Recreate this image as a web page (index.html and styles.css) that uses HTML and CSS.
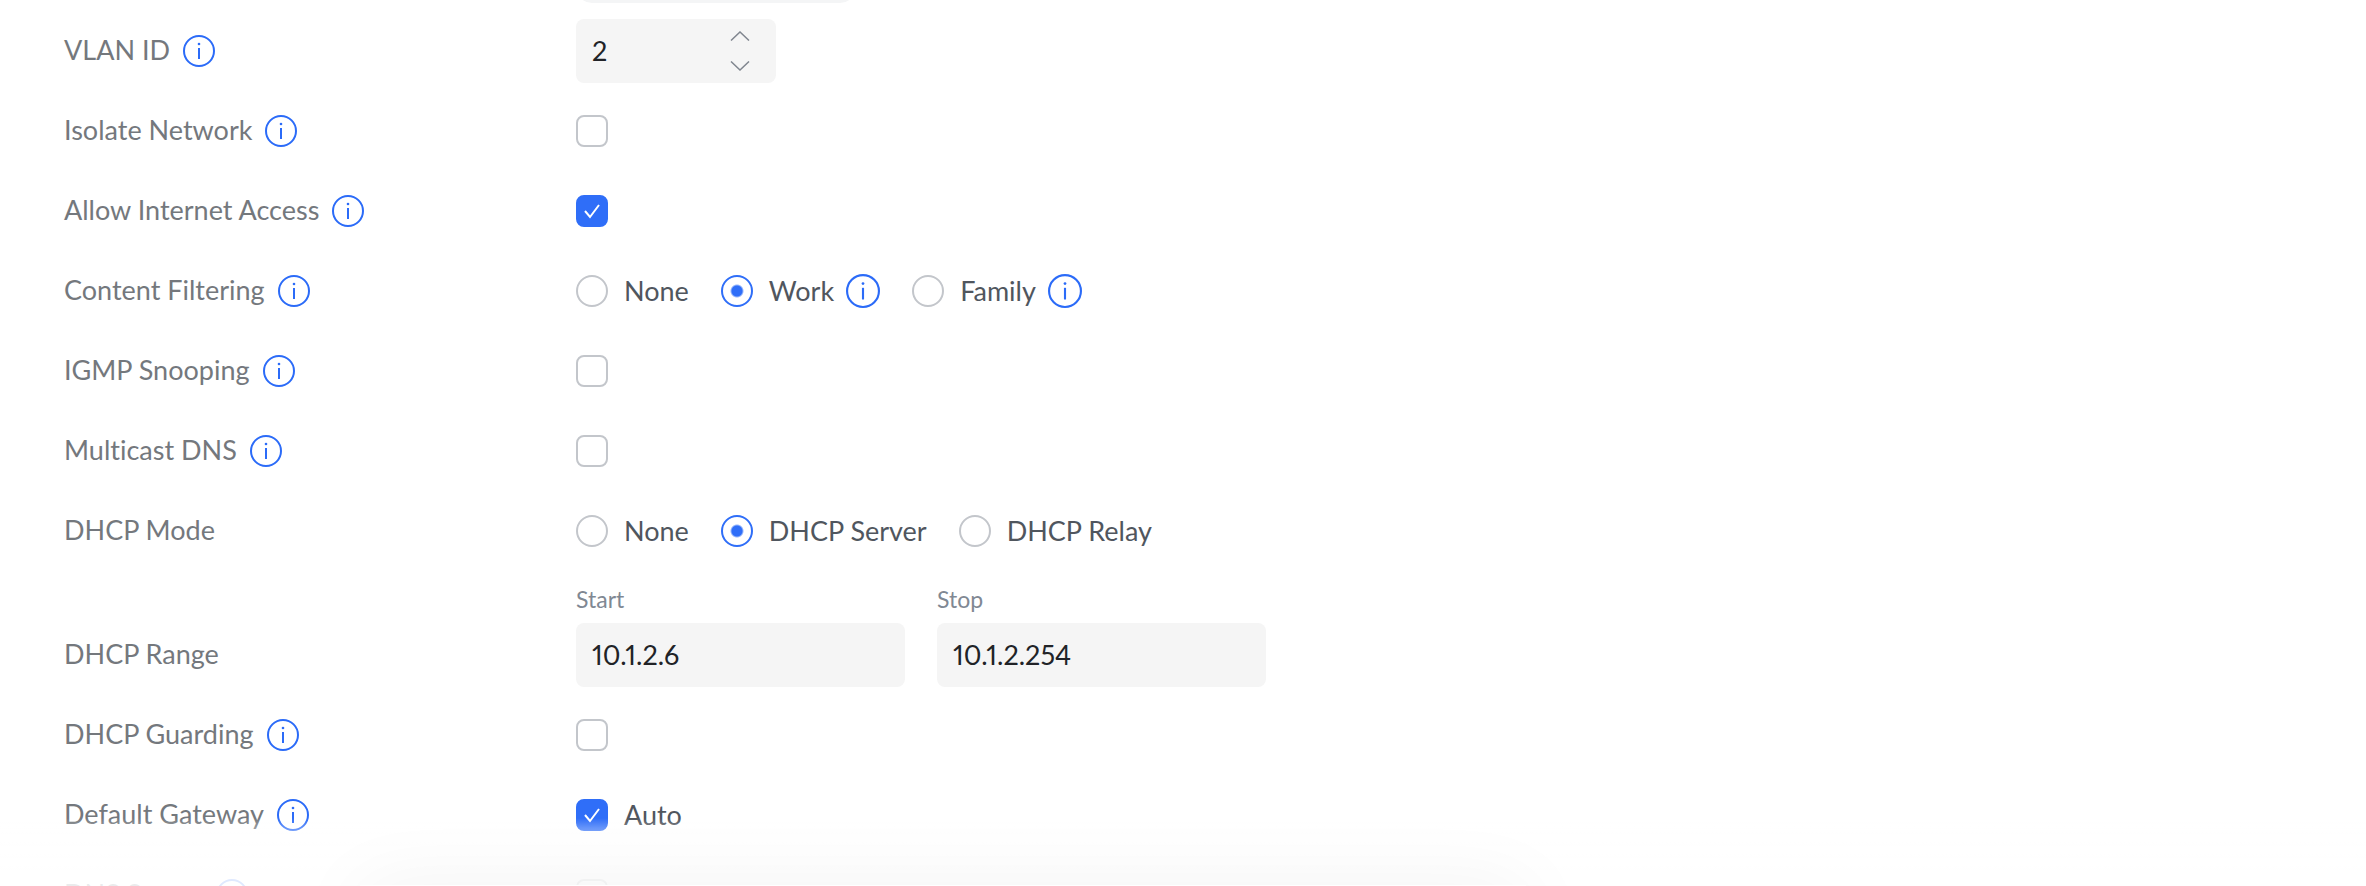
FILE: index.html
```html
<!DOCTYPE html>
<html lang="en">

<head>
    <meta charset="UTF-8">
    <title>Network Settings</title>
    <link rel="stylesheet" href="styles.css">
</head>

<body>

    <svg class="sprite" aria-hidden="true">
        <symbol id="info" viewBox="0 0 32 32">
            <circle cx="16" cy="16" r="15" fill="none" stroke="currentColor" stroke-width="2"/>
            <path d="M16 13v11" fill="none" stroke="currentColor" stroke-width="2"/>
            <circle cx="16" cy="9" r="1.3" fill="currentColor"/>
        </symbol>
    </svg>

    <form class="settings">
        <div class="row">
            <span></span>
            <button type="button" class="pill" aria-label="Network options"></button>
        </div>

        <div class="row">
            <div class="label">
                <label for="vlan">VLAN ID</label>
                <svg class="info"><use href="#info"/></svg>
            </div>
            <div class="number">
                <input type="text" inputmode="numeric" id="vlan" value="2">
                <div class="steps">
                    <button type="button" aria-label="Increase">
                        <svg viewBox="0 0 20 10"><path d="M1 9.5L10 1L19 9.5"/></svg>
                    </button>
                    <button type="button" aria-label="Decrease">
                        <svg viewBox="0 0 20 10"><path d="M1 .5L10 9L19 .5"/></svg>
                    </button>
                </div>
            </div>
        </div>

        <div class="row">
            <div class="label">
                <label for="isolate">Isolate Network</label>
                <svg class="info"><use href="#info"/></svg>
            </div>
            <div class="options">
                <input type="checkbox" id="isolate">
            </div>
        </div>

        <div class="row">
            <div class="label">
                <label for="internet">Allow Internet Access</label>
                <svg class="info"><use href="#info"/></svg>
            </div>
            <div class="options">
                <input type="checkbox" id="internet" checked>
            </div>
        </div>

        <div class="row">
            <div class="label">
                <span>Content Filtering</span>
                <svg class="info"><use href="#info"/></svg>
            </div>
            <div class="options">
                <label class="option"><input type="radio" name="filter">None</label>
                <div class="option-info">
                    <label class="option"><input type="radio" name="filter" checked>Work</label>
                    <svg class="info"><use href="#info"/></svg>
                </div>
                <div class="option-info">
                    <label class="option"><input type="radio" name="filter">Family</label>
                    <svg class="info"><use href="#info"/></svg>
                </div>
            </div>
        </div>

        <div class="row">
            <div class="label">
                <label for="igmp">IGMP Snooping</label>
                <svg class="info"><use href="#info"/></svg>
            </div>
            <div class="options">
                <input type="checkbox" id="igmp">
            </div>
        </div>

        <div class="row">
            <div class="label">
                <label for="mdns">Multicast DNS</label>
                <svg class="info"><use href="#info"/></svg>
            </div>
            <div class="options">
                <input type="checkbox" id="mdns">
            </div>
        </div>

        <div class="row">
            <div class="label">
                <span>DHCP Mode</span>
            </div>
            <div class="options">
                <label class="option"><input type="radio" name="dhcp">None</label>
                <label class="option"><input type="radio" name="dhcp" checked>DHCP Server</label>
                <label class="option"><input type="radio" name="dhcp">DHCP Relay</label>
            </div>
        </div>

        <div class="row">
            <div class="label">
                <span>DHCP Range</span>
            </div>
            <div class="range">
                <div class="field">
                    <label for="start">Start</label>
                    <input type="text" id="start" value="10.1.2.6">
                </div>
                <div class="field">
                    <label for="stop">Stop</label>
                    <input type="text" id="stop" value="10.1.2.254">
                </div>
            </div>
        </div>

        <div class="row">
            <div class="label">
                <label for="guard">DHCP Guarding</label>
                <svg class="info"><use href="#info"/></svg>
            </div>
            <div class="options">
                <input type="checkbox" id="guard">
            </div>
        </div>

        <div class="row">
            <div class="label">
                <span>Default Gateway</span>
                <svg class="info"><use href="#info"/></svg>
            </div>
            <div class="options">
                <label class="option"><input type="checkbox" checked>Auto</label>
            </div>
        </div>

        <div class="row">
            <div class="label">
                <span>DNS Server</span>
                <svg class="info"><use href="#info"/></svg>
            </div>
            <div class="options">
                <label class="option"><input type="checkbox">Auto</label>
            </div>
        </div>
    </form>

    <div class="fade"></div>

</body>

</html>
```

FILE: styles.css
```css
* {
    box-sizing: border-box;
}

body {
    margin: 0;
    height: 100vh;
    overflow: hidden;
    background: #fff;
    color: #50565e;
    font-family: Lato, sans-serif;
    font-size: 27px;
    line-height: 40px;
    font-variant-ligatures: none;
}

input,
button {
    font: inherit;
    margin: 0;
}

.sprite {
    display: none;
}

.settings {
    display: flex;
    flex-direction: column;
    gap: 16px;
    margin-top: -29px;
    padding: 0 64px;
}

.row {
    display: grid;
    grid-template-columns: 512px 1fr;
    align-items: end;
}

.label {
    display: flex;
    align-items: center;
    gap: 13px;
    height: 64px;
    color: #74787d;
}

.label > label,
.label > span {
    padding-bottom: 2px;
}

.info {
    width: 32px;
    height: 32px;
    flex: none;
    color: #2b6bf8;
}

.pill {
    width: 280px;
    height: 32px;
    padding: 0;
    border: none;
    border-radius: 16px;
    background: #f4f5f6;
}

/* text fields */
input[type="text"] {
    width: 100%;
    height: 64px;
    padding: 0 16px 2px;
    border: none;
    border-radius: 8px;
    background: #f5f5f5;
    color: #212327;
    font-variant-numeric: proportional-nums;
    outline: none;
}

.number {
    position: relative;
    width: 200px;
    height: 64px;
}

.steps {
    position: absolute;
    top: 0;
    right: 20px;
    height: 64px;
    display: flex;
    flex-direction: column;
    justify-content: space-between;
    padding: 8px 0;
}

.steps button {
    display: flex;
    align-items: center;
    justify-content: center;
    width: 32px;
    height: 18px;
    padding: 0;
    border: none;
    background: none;
}

.steps svg {
    width: 20px;
    height: 10px;
    fill: none;
    stroke: #80868f;
    stroke-width: 1.5;
}

.range {
    display: flex;
    gap: 32px;
}

.field {
    width: 329px;
}

.field label {
    display: block;
    height: 44px;
    font-size: 23px;
    color: #808893;
}

.field input {
    display: block;
}

/* checkboxes and radios */
.options {
    display: flex;
    align-items: center;
    gap: 32px;
    height: 64px;
}

.option,
.option-info {
    display: flex;
    align-items: center;
    gap: 16px;
}

.option-info {
    gap: 12px;
}

.option-info .info {
    width: 34px;
    height: 34px;
}

input[type="checkbox"],
input[type="radio"] {
    appearance: none;
    flex: none;
    width: 32px;
    height: 32px;
    border: 2px solid #c3c6cb;
    border-radius: 8px;
    background: #fff;
}

input[type="radio"] {
    border-radius: 50%;
}

input[type="checkbox"]:checked {
    border-color: #2f6ef8;
    background: #2f6ef8 url("data:image/svg+xml,%3Csvg xmlns='http://www.w3.org/2000/svg' viewBox='0 0 28 28'%3E%3Cpath d='M7 14l5 6 9-12' fill='none' stroke='white' stroke-width='2'/%3E%3C/svg%3E") center / 28px no-repeat;
}

input[type="radio"]:checked {
    border-color: #2f6ef8;
    background: radial-gradient(circle, #2f6ef8 5px, #fff 7px);
}

/* fade over the bottom edge of the list */
.fade {
    position: fixed;
    left: 0;
    right: 0;
    bottom: 0;
    height: 68px;
    background: linear-gradient(rgba(255, 255, 255, 0), rgba(255, 255, 255, .4) 22%, rgba(255, 255, 255, .85) 80%);
}

.fade::after {
    content: "";
    position: absolute;
    left: 360px;
    right: 840px;
    top: calc(100% - 1px);
    height: 80px;
    background: #fff;
    box-shadow: 0 0 80px rgba(0, 0, 0, .05);
}
```
